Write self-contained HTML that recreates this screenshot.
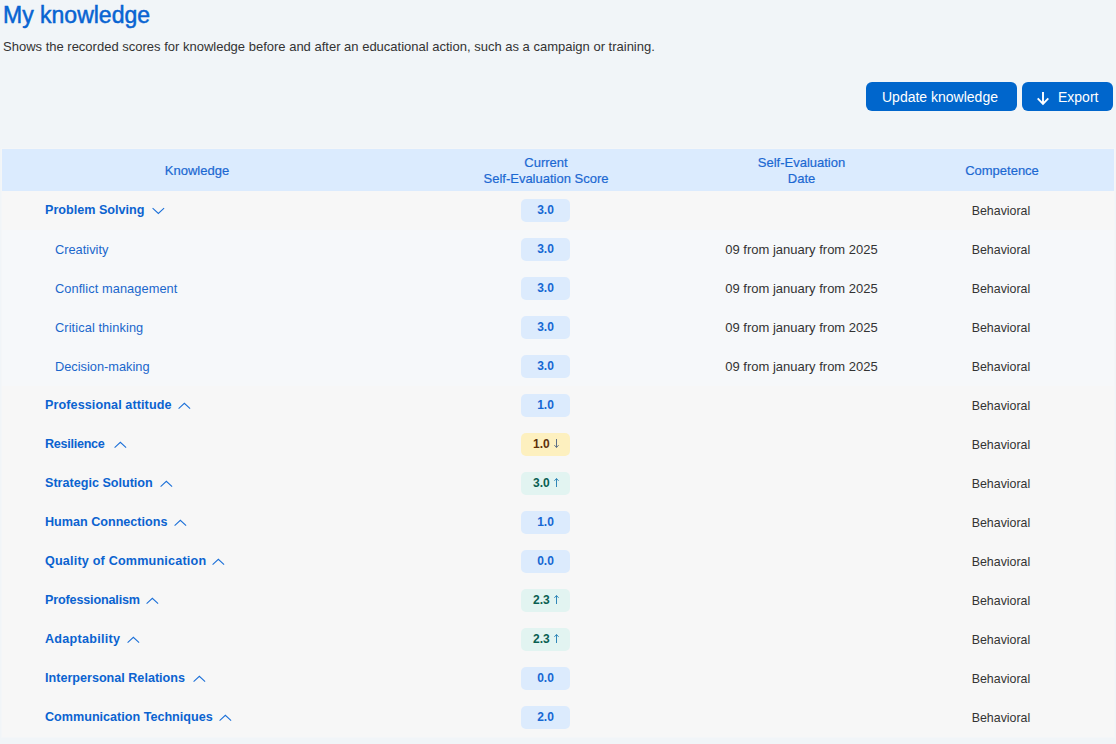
<!DOCTYPE html>
<html><head><meta charset="utf-8">
<style>
*{box-sizing:border-box;margin:0;padding:0}
html,body{width:1116px;height:744px;overflow:hidden;background:#f1f5f8;font-family:"Liberation Sans",sans-serif}
.title{position:absolute;left:3px;top:0px;font-size:23px;line-height:30px;font-weight:normal;color:#0864d2;-webkit-text-stroke:0.5px #0864d2;white-space:nowrap}
.sub{position:absolute;left:3px;top:39px;font-size:13px;line-height:16px;color:#333;white-space:nowrap}
.btn{position:absolute;top:82px;height:29px;background:#0066cc;color:#fff;border-radius:6px;font-size:14px;line-height:29px;white-space:nowrap}
.b1{left:866px;width:151px;padding-left:16px;padding-top:1px}
.b2{left:1022px;width:91px}
.b2 svg{position:absolute;left:15px;top:9px}
.b2 span{position:absolute;left:36px;top:1px}
.tbl{position:absolute;left:2px;top:149px;width:1112px;height:588px;background:#f7f7f7;box-shadow:0 0 0 1px #f4f6f8}
.head{position:absolute;left:0;top:0;width:1112px;height:42px;background:#dbebfe;color:#1b68d2;font-size:13px;line-height:16px;-webkit-text-stroke:0.2px #1b68d2}
.head div{position:absolute;text-align:center;white-space:nowrap}
.row.cr{background:#f6f8fa}
.row{position:absolute;left:2px;width:1112px;height:39px;font-size:12.8px;color:#333;line-height:39px;white-space:nowrap}
.row>div{position:absolute;top:1px}
.k{left:0}
.k.p{left:43px;top:0!important;font-weight:bold;color:#0b63d0;font-size:12.6px}
.k.c{left:53px;top:0!important;color:#1b67cc;font-size:12.8px}
.chev{position:absolute;top:16px}
.s{left:389px;top:0!important;width:308px;text-align:center}
.d{left:698px;top:0!important;width:203px;text-align:center;font-size:13px}
.cp{left:902px;width:194px;text-align:center;font-size:12.4px}
.s .bad{position:absolute;left:130px;top:8px;width:49px;height:23px;line-height:22px;border-radius:5px;background:#dcebfd;color:#1567d3;font-weight:bold;font-size:12px;text-align:center}
.bad b{font-weight:bold}
.bad.y b,.bad.g b{position:absolute;left:12px;top:0}
.bad .ar{position:absolute;left:33px;top:6px}
.bad.y .ar{top:5.5px}
.s .bad.y{background:#fdf0bf;color:#5e300c}
.s .bad.g{background:#e2f4f1;color:#0a5f52}
</style></head><body>
<div class="title">My knowledge</div>
<div class="sub">Shows the recorded scores for knowledge before and after an educational action, such as a campaign or training.</div>
<div class="btn b1">Update knowledge</div>
<div class="btn b2"><svg width="14" height="15" viewBox="0 0 14 15"><path d="M6 1.1 V12.8 M0.7 7.4 L6 12.8 L11.3 7.4" fill="none" stroke="#fff" stroke-width="1.9"/></svg><span>Export</span></div>
<div class="tbl">
<div class="head">
<div style="left:0;width:390px;top:14px">Knowledge</div>
<div style="left:390px;width:308px;top:6px">Current<br>Self-Evaluation Score</div>
<div style="left:698px;width:203px;top:6px">Self-Evaluation<br>Date</div>
<div style="left:903px;width:194px;top:14px">Competence</div>
</div>
</div>
<div class="row" style="top:191px"><div class="k p"><span class="nm">Problem Solving</span></div><svg class="chev" style="left:149.8px" width="13" height="8" viewBox="0 0 13 8"><path d="M0.6 1.2 L6.35 6.5 L12.1 1.2" fill="none" stroke="#1a6fd8" stroke-width="1.05"/></svg><div class="s"><span class="bad">3.0</span></div><div class="d"></div><div class="cp">Behavioral</div></div>
<div class="row cr" style="top:230px"><div class="k c"><span class="nm">Creativity</span></div><div class="s"><span class="bad">3.0</span></div><div class="d">09 from january from 2025</div><div class="cp">Behavioral</div></div>
<div class="row cr" style="top:269px"><div class="k c"><span class="nm" style="letter-spacing:0.080px">Conflict management</span></div><div class="s"><span class="bad">3.0</span></div><div class="d">09 from january from 2025</div><div class="cp">Behavioral</div></div>
<div class="row cr" style="top:308px"><div class="k c"><span class="nm" style="letter-spacing:0.090px">Critical thinking</span></div><div class="s"><span class="bad">3.0</span></div><div class="d">09 from january from 2025</div><div class="cp">Behavioral</div></div>
<div class="row cr" style="top:347px"><div class="k c"><span class="nm">Decision-making</span></div><div class="s"><span class="bad">3.0</span></div><div class="d">09 from january from 2025</div><div class="cp">Behavioral</div></div>
<div class="row" style="top:386px"><div class="k p"><span class="nm" style="letter-spacing:0.095px">Professional attitude</span></div><svg class="chev" style="left:175.8px" width="13" height="8" viewBox="0 0 13 8"><path d="M0.6 6.7 L6.35 1.3 L12.1 6.7" fill="none" stroke="#1a6fd8" stroke-width="1.05"/></svg><div class="s"><span class="bad">1.0</span></div><div class="d"></div><div class="cp">Behavioral</div></div>
<div class="row" style="top:425px"><div class="k p"><span class="nm" style="letter-spacing:-0.280px">Resilience</span></div><svg class="chev" style="left:112.4px" width="13" height="8" viewBox="0 0 13 8"><path d="M0.6 6.7 L6.35 1.3 L12.1 6.7" fill="none" stroke="#1a6fd8" stroke-width="1.05"/></svg><div class="s"><span class="bad y"><b>1.0</b><svg class="ar" width="5" height="9" viewBox="0 0 5 9"><path d="M2.5 0 V8.6 M0.4 6.2 L2.5 8.4 L4.6 6.2" fill="none" stroke="#5d6f86" stroke-width="1"/></svg></span></div><div class="d"></div><div class="cp">Behavioral</div></div>
<div class="row" style="top:464px"><div class="k p"><span class="nm">Strategic Solution</span></div><svg class="chev" style="left:158.2px" width="13" height="8" viewBox="0 0 13 8"><path d="M0.6 6.7 L6.35 1.3 L12.1 6.7" fill="none" stroke="#1a6fd8" stroke-width="1.05"/></svg><div class="s"><span class="bad g"><b>3.0</b><svg class="ar" width="5" height="9" viewBox="0 0 5 9"><path d="M2.5 9 V0.4 M0.4 2.8 L2.5 0.6 L4.6 2.8" fill="none" stroke="#2f86b8" stroke-width="1"/></svg></span></div><div class="d"></div><div class="cp">Behavioral</div></div>
<div class="row" style="top:503px"><div class="k p"><span class="nm">Human Connections</span></div><svg class="chev" style="left:172.1px" width="13" height="8" viewBox="0 0 13 8"><path d="M0.6 6.7 L6.35 1.3 L12.1 6.7" fill="none" stroke="#1a6fd8" stroke-width="1.05"/></svg><div class="s"><span class="bad">1.0</span></div><div class="d"></div><div class="cp">Behavioral</div></div>
<div class="row" style="top:542px"><div class="k p"><span class="nm" style="letter-spacing:0.190px">Quality of Communication</span></div><svg class="chev" style="left:210.3px" width="13" height="8" viewBox="0 0 13 8"><path d="M0.6 6.7 L6.35 1.3 L12.1 6.7" fill="none" stroke="#1a6fd8" stroke-width="1.05"/></svg><div class="s"><span class="bad">0.0</span></div><div class="d"></div><div class="cp">Behavioral</div></div>
<div class="row" style="top:581px"><div class="k p"><span class="nm" style="letter-spacing:-0.160px">Professionalism</span></div><svg class="chev" style="left:144.3px" width="13" height="8" viewBox="0 0 13 8"><path d="M0.6 6.7 L6.35 1.3 L12.1 6.7" fill="none" stroke="#1a6fd8" stroke-width="1.05"/></svg><div class="s"><span class="bad g"><b>2.3</b><svg class="ar" width="5" height="9" viewBox="0 0 5 9"><path d="M2.5 9 V0.4 M0.4 2.8 L2.5 0.6 L4.6 2.8" fill="none" stroke="#2f86b8" stroke-width="1"/></svg></span></div><div class="d"></div><div class="cp">Behavioral</div></div>
<div class="row" style="top:620px"><div class="k p"><span class="nm" style="letter-spacing:0.260px">Adaptability</span></div><svg class="chev" style="left:124.6px" width="13" height="8" viewBox="0 0 13 8"><path d="M0.6 6.7 L6.35 1.3 L12.1 6.7" fill="none" stroke="#1a6fd8" stroke-width="1.05"/></svg><div class="s"><span class="bad g"><b>2.3</b><svg class="ar" width="5" height="9" viewBox="0 0 5 9"><path d="M2.5 9 V0.4 M0.4 2.8 L2.5 0.6 L4.6 2.8" fill="none" stroke="#2f86b8" stroke-width="1"/></svg></span></div><div class="d"></div><div class="cp">Behavioral</div></div>
<div class="row" style="top:659px"><div class="k p"><span class="nm">Interpersonal Relations</span></div><svg class="chev" style="left:190.6px" width="13" height="8" viewBox="0 0 13 8"><path d="M0.6 6.7 L6.35 1.3 L12.1 6.7" fill="none" stroke="#1a6fd8" stroke-width="1.05"/></svg><div class="s"><span class="bad">0.0</span></div><div class="d"></div><div class="cp">Behavioral</div></div>
<div class="row" style="top:698px"><div class="k p"><span class="nm">Communication Techniques</span></div><svg class="chev" style="left:217.2px" width="13" height="8" viewBox="0 0 13 8"><path d="M0.6 6.7 L6.35 1.3 L12.1 6.7" fill="none" stroke="#1a6fd8" stroke-width="1.05"/></svg><div class="s"><span class="bad">2.0</span></div><div class="d"></div><div class="cp">Behavioral</div></div>
</body></html>
